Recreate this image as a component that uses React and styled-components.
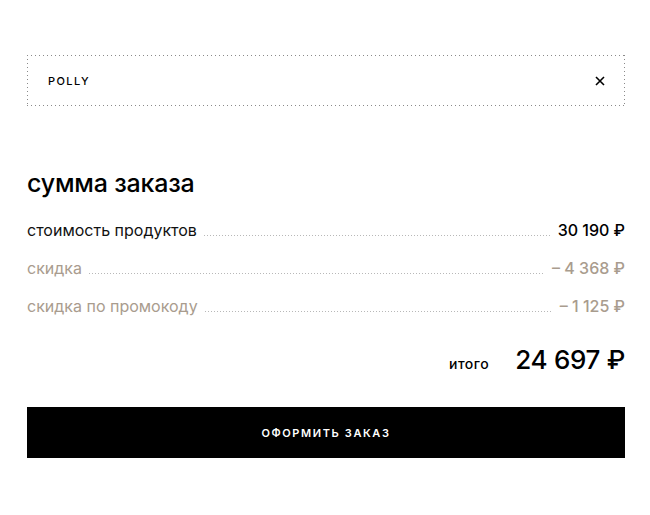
import React from 'react'
import styled, { createGlobalStyle } from 'styled-components'

const Global = createGlobalStyle`
  body {
    margin: 0;
    background: #fff;
    font-family: Inter, "Noto Sans", Arial, sans-serif;
    color: #000;
  }
`

const dots = color => `linear-gradient(to right, ${color} 1px, transparent 1px)`

const Page = styled.div`
  width: 650px;
  padding: 55px 25px 0 27px;
  box-sizing: border-box;
`

const Promo = styled.div`
  height: 51px;
  display: flex;
  align-items: center;
  justify-content: space-between;
  padding: 0 20px 0 21px;
  box-sizing: border-box;
  background-image:
    ${dots('#8a8a8a')},
    ${dots('#8a8a8a')},
    linear-gradient(to bottom, #8a8a8a 1px, transparent 1px),
    linear-gradient(to bottom, #8a8a8a 1px, transparent 1px);
  background-size: 4px 1px, 4px 1px, 1px 4px, 1px 4px;
  background-repeat: repeat-x, repeat-x, repeat-y, repeat-y;
  background-position: left top, left bottom, left top, right top;
`

const Code = styled.span`
  font-size: 11px;
  font-weight: 500;
  letter-spacing: 1.4px;
`

const Clear = styled.button`
  border: 0;
  background: none;
  padding: 0;
  display: flex;
  cursor: pointer;
`

const Title = styled.h2`
  margin: 62px 0 22px;
  font-size: 25px;
  font-weight: 500;
  letter-spacing: -0.2px;
`

const Row = styled.div`
  display: flex;
  align-items: baseline;
  height: 38px;
  font-size: 16px;
  color: ${p => (p.$muted ? '#a99c8e' : '#111')};
`

const Leader = styled.span`
  flex: 1;
  margin: 0 7px;
  height: 1px;
  background-image: linear-gradient(to right, #b8b8b8 1px, transparent 1px);
  background-size: 3px 1px;
  background-repeat: repeat-x;
`

const Value = styled.span`
  font-weight: 500;
  font-size: 16px;
  color: ${p => (p.$muted ? '#a99c8e' : '#000')};
`

const Total = styled.div`
  display: flex;
  justify-content: flex-end;
  align-items: baseline;
  gap: 26px;
  margin-top: 10px;
`

const TotalLabel = styled.span`
  font-size: 14px;
  font-weight: 500;
  letter-spacing: 0.5px;
`

const TotalValue = styled.span`
  font-size: 26px;
  font-weight: 500;
  letter-spacing: -0.3px;
`

const Submit = styled.button`
  display: block;
  width: 100%;
  height: 51px;
  margin-top: 32px;
  border: 0;
  background: #000;
  color: #fff;
  font-family: inherit;
  font-size: 11px;
  font-weight: 600;
  letter-spacing: 1.6px;
  cursor: pointer;
`

const rows = [
  { label: 'стоимость продуктов', value: '30 190 ₽' },
  { label: 'скидка', value: '– 4 368 ₽', muted: true },
  { label: 'скидка по промокоду', value: '– 1 125 ₽', muted: true },
]

export default function App() {
  return (
    <Page>
      <Global />
      <Promo>
        <Code>POLLY</Code>
        <Clear aria-label="удалить промокод">
          <svg width="10" height="10" viewBox="0 0 10 10">
            <path d="M1 1L9 9M9 1L1 9" stroke="#000" strokeWidth="1.6" />
          </svg>
        </Clear>
      </Promo>
      <Title>сумма заказа</Title>
      {rows.map(r => (
        <Row key={r.label} $muted={r.muted}>
          <span>{r.label}</span>
          <Leader />
          <Value $muted={r.muted}>{r.value}</Value>
        </Row>
      ))}
      <Total>
        <TotalLabel>итого</TotalLabel>
        <TotalValue>24 697 ₽</TotalValue>
      </Total>
      <Submit>ОФОРМИТЬ ЗАКАЗ</Submit>
    </Page>
  )
}
